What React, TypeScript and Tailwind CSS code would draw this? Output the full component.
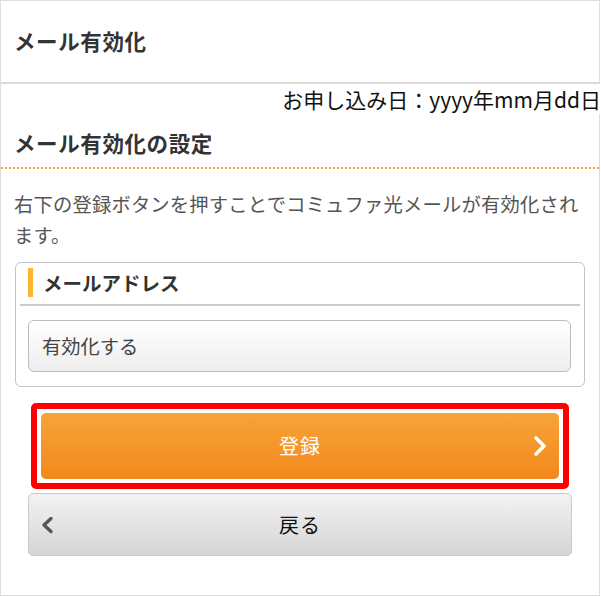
const font = '"Noto Sans CJK JP", "Noto Sans", sans-serif';

const ChevronRight = () => (
  <svg width="14" height="22" viewBox="0 0 14 22" className="block">
    <polyline points="3,3 11,11 3,19" fill="none" stroke="#ffffff" strokeWidth="3.6" strokeLinecap="round" strokeLinejoin="round" />
  </svg>
);

const ChevronLeft = () => (
  <svg width="14" height="18" viewBox="0 0 14 18" className="block">
    <polyline points="11,2.5 4,9 11,15.5" fill="none" stroke="#555555" strokeWidth="3.4" strokeLinecap="round" strokeLinejoin="round" />
  </svg>
);

export default function App() {
  return (
    <div className="w-[601px] h-[597px] bg-white" style={{ fontFamily: font }}>
      <div className="h-[596px] w-[600px] border border-[#dedede] flex flex-col">
        {/* header */}
        <div className="h-[83px] flex items-center px-[13px] border-b-2 border-[#dadada]">
          <h1 className="text-[21.5px] font-bold text-[#333] tracking-[0.6px]">メール有効化</h1>
        </div>

        {/* date */}
        <div className="flex justify-end -mr-[2px] h-[30px] items-center">
          <span className="text-[21px] leading-[30px] text-[#111] bg-white pl-1">お申し込み日：yyyy年mm月dd日</span>
        </div>

        {/* section heading */}
        <div className="pt-[14px] pb-[9px] px-[13px] border-b-2 border-dotted border-[#f39a38]">
          <h2 className="text-[21.5px] leading-[30px] font-bold text-[#333] tracking-[0.6px]">メール有効化の設定</h2>
        </div>

        <p className="mt-[20px] px-[13px] text-[19.3px] leading-[31px] text-[#555] tracking-[0.2px]">
          右下の登録ボタンを押すことでコミュファ光メールが有効化されます。
        </p>

        {/* card */}
        <div className="mt-[11px] mx-[14px] border border-[#c4c4c4] rounded-[6px] pt-[5px] pb-[14px]">
          <div className="mx-[4px] flex items-stretch h-[29px]">
            <div className="ml-[8px] w-[5px] bg-[#fbb531]" />
            <div className="ml-[10px] flex items-center text-[19.5px] font-bold text-[#333]">メールアドレス</div>
          </div>
          <div className="mx-[4px] mt-[7px] h-[2px] bg-[#cccccc]" />
          <div className="mt-[14px] ml-[12px] mr-[13px] h-[52px] rounded-[6px] border border-[#bdbdbd] bg-gradient-to-b from-white to-[#eeeeee] flex items-center px-[13px]">
            <span className="text-[19.3px] text-[#444]">有効化する</span>
          </div>
        </div>

        {/* register button */}
        <div className="mt-[16px] mx-auto w-[538px] h-[86px] border-[6px] border-[#ff0000] rounded-[5px] p-[4px] bg-white">
          <button className="relative w-full h-full rounded-[5px] bg-gradient-to-b from-[#f6a437] to-[#f2881c] flex items-center justify-center">
            <span className="text-[20px] text-white tracking-[1px]">登録</span>
            <span className="absolute right-[12px] top-1/2 -translate-y-1/2">
              <ChevronRight />
            </span>
          </button>
        </div>

        {/* back button */}
        <button className="relative mt-[4px] mx-auto w-[544px] h-[63px] rounded-[5px] border border-[#c9c9c9] bg-gradient-to-b from-[#f3f3f3] to-[#d5d5d5] flex items-center justify-center">
          <span className="absolute left-[11px] top-1/2 -translate-y-1/2">
            <ChevronLeft />
          </span>
          <span className="text-[20px] text-[#111] tracking-[1px]">戻る</span>
        </button>
      </div>
    </div>
  );
}
